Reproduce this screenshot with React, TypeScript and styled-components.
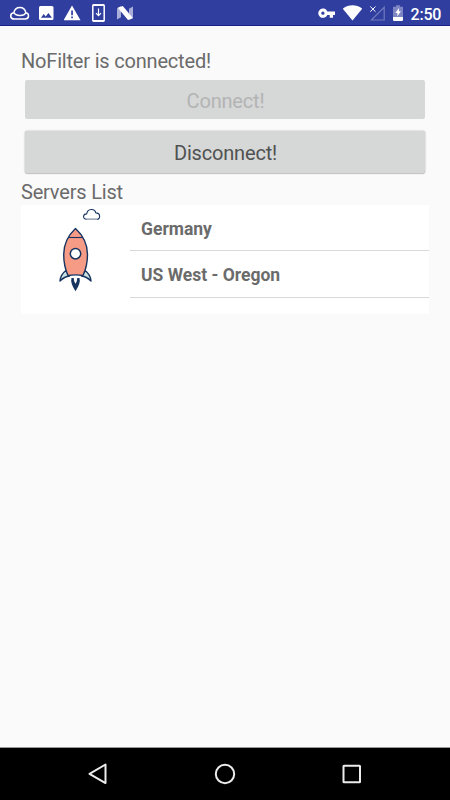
import React from 'react';
import styled, { createGlobalStyle } from 'styled-components';

const GlobalStyle = createGlobalStyle`
  * { box-sizing: border-box; }
  body { margin: 0; background: #fafafa; }
`;

const Screen = styled.div`
  width: 450px;
  height: 800px;
  display: flex;
  flex-direction: column;
  overflow: hidden;
  background: #fafafa;
  font-family: Roboto, sans-serif;
`;

const StatusBar = styled.header`
  height: 26px;
  flex: none;
  display: flex;
  justify-content: space-between;
  padding: 0 10px;
  background: #303f9f;
  border-bottom: 1px solid #17208a;
  color: #fff;
`;

const StatusGroup = styled.div<{ $gap: number }>`
  display: flex;
  align-items: flex-start;
  gap: ${(p) => p.$gap}px;
`;

const StatusIcon = styled.svg`
  display: block;
  flex: none;
  height: 25px;
`;

const Clock = styled.span`
  width: 30px;
  margin-left: -1px;
  font-size: 16px;
  font-weight: 500;
  line-height: 29px;
  letter-spacing: -0.2px;
  text-indent: 0.5px;
  white-space: nowrap;
`;

const Content = styled.main`
  flex: 1;
  display: flex;
  flex-direction: column;
  padding: 24px 21px 0;
`;

const Label = styled.div<{ $lineHeight: number }>`
  height: 25px;
  line-height: ${(p) => p.$lineHeight}px;
  font-size: 20px;
  letter-spacing: -0.19px;
  color: #6b6b6b;
  white-space: nowrap;
`;

const Actions = styled.div`
  display: flex;
  flex-direction: column;
  gap: 12px;
  padding: 5px 4px 7px;
`;

const ActionButton = styled.button`
  height: 42px;
  padding: 1px 0 0;
  border: 0;
  border-radius: 2px;
  background: #d6d7d7;
  color: #505251;
  font: 400 20px/24px Roboto, sans-serif;
  letter-spacing: -0.19px;
  text-indent: 1px;
  box-shadow: 0 0 2px rgba(0, 0, 0, 0.3), 0 1px 1px rgba(0, 0, 0, 0.16);
  &:disabled {
    height: 39px;
    padding-top: 2px;
    color: #b3b4b4;
    box-shadow: none;
  }
`;

const ServerPanel = styled.section`
  height: 109px;
  display: flex;
  background: #fff;
`;

const Artwork = styled.svg`
  width: 109px;
  height: 109px;
  flex: none;
`;

const ServerList = styled.ul`
  flex: 1;
  margin: 0;
  padding: 0;
  list-style: none;
`;

const Server = styled.li`
  height: 47px;
  padding: 2px 11px 0;
  border-bottom: 1px solid #d9d9d9;
  line-height: 45px;
  font-size: 17.5px;
  font-weight: 700;
  color: #6b6b6b;
  &:first-child {
    height: 46px;
    line-height: 44px;
  }
`;

const NavBar = styled.nav`
  height: 53px;
  flex: none;
  display: grid;
  grid-template-columns: repeat(3, 127px);
  justify-content: center;
  align-items: center;
  justify-items: center;
  background: #000;
  border-top: 1px solid #999;
`;

const NavIcon = styled.svg`
  display: block;
  width: 24px;
  height: 24px;
  fill: none;
  stroke: #ececec;
  stroke-width: 2;
  stroke-linejoin: round;
`;

const servers = ['Germany', 'US West - Oregon'];

function Notifications() {
  return (
    <StatusGroup $gap={0}>
      <StatusIcon width="29" viewBox="0 0 29 25" fill="none" stroke="#fff" strokeWidth="1.5">
        <path d="M4.200 19h10.800c4.600 0 4.500-5.500.8-6.300C14.600 5.700 5.200 5.700 3.900 12.700-.4 13.400-.4 19 4.200 19z" />
        <path d="M4.200 12.800c1.100 3.400 10.100 3.600 11.300.2" />
      </StatusIcon>
      <StatusIcon width="25" viewBox="0 0 25 25">
        <path fill="#fff" fillRule="evenodd" d="M1.5 6h11.5q1.5 0 1.5 1.5v11q0 1.5-1.5 1.5H1.500Q0 20 0 18.500v-11Q0 6 1.500 6zM2 17.700h11l-3.600-4.700-2.700 3.500-2-2.400z" />
      </StatusIcon>
      <StatusIcon width="28" viewBox="0 0 28 25">
        <path fill="#fff" fillRule="evenodd" d="M8 5.500 16.500 20.300H-.5zM7.200 10.500v4.700h1.700v-4.700zM7.200 16.500v1.700h1.700v-1.700z" />
      </StatusIcon>
      <StatusIcon width="25" viewBox="0 0 25 25" fill="none" stroke="#fff">
        <rect x=".8" y="4.900" width="11.400" height="16.200" rx=".7" strokeWidth="1.500" />
        <path d="M1 5.200h11M1 20.900h11" strokeWidth="1.800" />
        <path d="M6.500 8.500v7M4 13.200l2.500 2.500 2.500-2.500" strokeWidth="1.200" />
      </StatusIcon>
      <StatusIcon width="16" viewBox="0 0 16 25">
        <path fill="#a9afd8" d="M0 8.500 4 6v11.300L0 19.500zM12 8.700 16 6.500v11L12 20z" />
        <path fill="#fff" d="M.8 7.800 5.800 6 16 18.300 11 20z" />
      </StatusIcon>
    </StatusGroup>
  );
}

function SystemStatus() {
  return (
    <StatusGroup $gap={8}>
      <StatusIcon width="17" viewBox="0 0 17 25" fill="#fff">
        <path fillRule="evenodd" d="M9.300 11.400A4.700 4.700 0 1 0 9.300 14.900H11.700V17.700h3.300v-2.800h2v-3.500zM4.900 11.500a1.650 1.650 0 1 1 0 3.300 1.650 1.650 0 0 1 0-3.300z" />
      </StatusIcon>
      <StatusIcon width="19" viewBox="0 0 19 25">
        <path fill="#fff" d="M-.3 8.700C5.500 4 13.500 4 19.300 8.700L9.500 20.500z" />
      </StatusIcon>
      <StatusIcon width="15" viewBox="0 0 15 25" fill="none">
        <path d="M1.300 20H14.200V7.200z" stroke="#7079bd" strokeWidth="1.200" />
        <path d="m0 6.500 6 6M6 6.500l-6 6" stroke="#303f9f" strokeWidth="3" />
        <path d="m.3 6.500 5.200 5.200M5.500 6.500.3 11.700" stroke="#fff" strokeWidth="1" />
      </StatusIcon>
      <StatusIcon width="10" viewBox="0 0 10 25">
        <path fill="#7d86c3" d="M3 5.200h4v1.500h3V17H0V6.700h3z" />
        <path fill="#fff" d="M0 17h10v2.500q0 1.500-1 1.500H1q-1 0-1-1.500zM5.900 8 2.300 13h2.100v3.300l3.500-5.100H5.900z" />
      </StatusIcon>
      <Clock>2:50</Clock>
    </StatusGroup>
  );
}

function RocketArt() {
  return (
    <Artwork viewBox="21 205 109 109" fill="none" stroke="#173461" strokeWidth="1.400" strokeLinejoin="round">
      <path strokeWidth="1.100" d="M86.500 219.300C82.500 219.300 82.600 214 86.700 213.900 87.600 208.400 94.700 208.200 95.800 212.900 100.700 212.900 100.700 219.300 97 219.300z" />
      <path stroke="#a4aab5" strokeWidth="1.200" d="M86.500 219.400h10.500" />
      <path fill="#c8dfdf" d="M66 270.500Q60.500 274.500 60 281 64.500 276.500 69.500 276zM85 270.500Q90.500 274.500 91 281 86.500 276.500 81.500 276z" />
      <path fill="#f69b85" d="M75.500 228.500Q87.500 239.500 87.500 254.500 87.500 266 83 275.500 75.500 274.200 68 275.500 63.700 266 63.700 254.500 63.700 239.500 75.500 228.500z" />
      <path strokeWidth="1.100" d="M68 237.500h15" />
      <circle cx="75.500" cy="253.700" r="5.200" fill="#fff" strokeWidth="1.500" />
      <path fill="#173461" stroke="none" d="M71.500 278h2.200l.6 3.500 1.200 2.300 1.200-2.300.6-3.500h2.200q1.500 5-4 13.200-5.500-8.200-4-13.200z" />
    </Artwork>
  );
}

export default function App() {
  return (
    <Screen>
      <GlobalStyle />
      <StatusBar>
        <Notifications />
        <SystemStatus />
      </StatusBar>
      <Content>
        <Label $lineHeight={23}>NoFilter is connected!</Label>
        <Actions>
          <ActionButton disabled>Connect!</ActionButton>
          <ActionButton>Disconnect!</ActionButton>
        </Actions>
        <Label $lineHeight={25}>Servers List</Label>
        <ServerPanel>
          <RocketArt />
          <ServerList>
            {servers.map((name) => (
              <Server key={name}>{name}</Server>
            ))}
          </ServerList>
        </ServerPanel>
      </Content>
      <NavBar>
        <NavIcon viewBox="0 0 24 24"><path d="M19.500 2.500v18.600L3.500 11.800z" /></NavIcon>
        <NavIcon viewBox="0 0 24 24"><circle cx="12" cy="12" r="9.200" /></NavIcon>
        <NavIcon viewBox="0 0 24 24"><rect x="3.500" y="3.800" width="16.500" height="16.500" rx=".5" /></NavIcon>
      </NavBar>
    </Screen>
  );
}
